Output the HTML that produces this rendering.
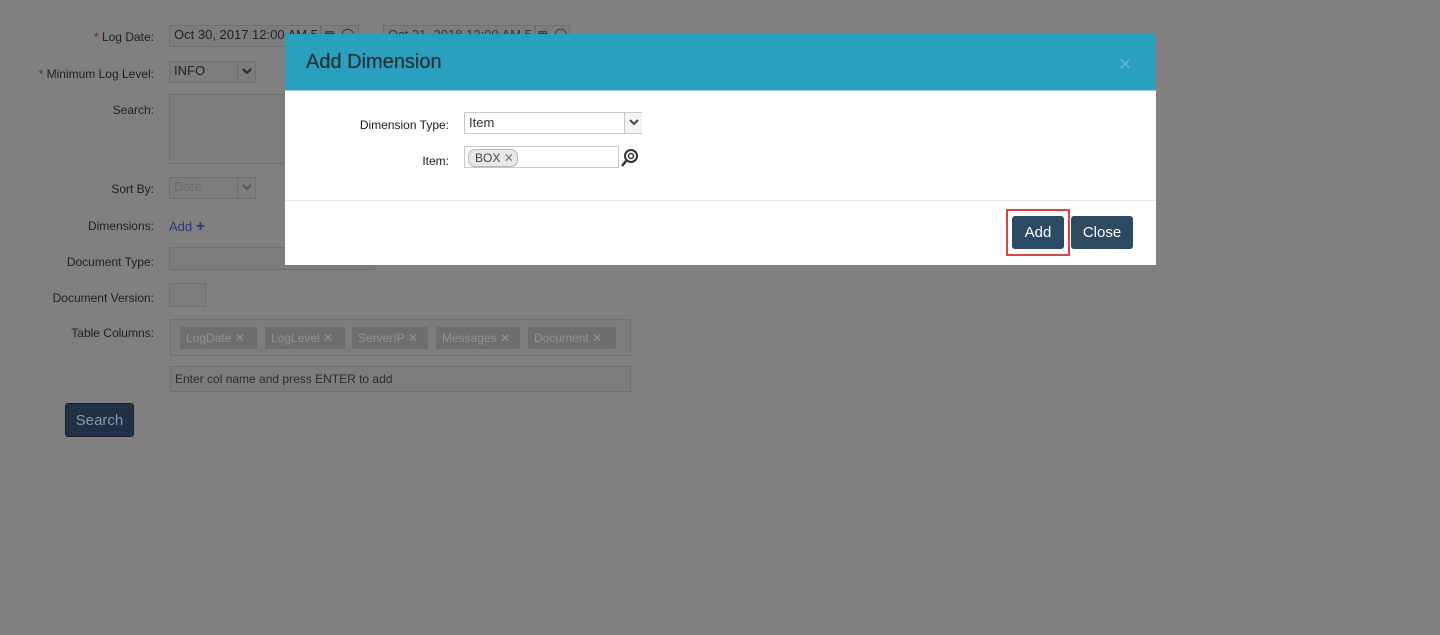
<!DOCTYPE html>
<html><head><meta charset="utf-8"><style>
*{box-sizing:border-box}
body{margin:0;width:1440px;height:635px;background:#808080;font-family:"Liberation Sans",sans-serif;font-size:12px;color:#1a1a1a;position:relative;overflow:hidden}
.a{position:absolute}
.lbl{position:absolute;text-align:right;width:154px;left:0;font-size:12px;color:#1e1e1e}
.req{color:#7a1f1f}
.box{position:absolute;border:1px solid #6f6f6f;background:#7d7d7d}
.txt{color:#222;font-size:13px;padding-left:4px;line-height:18px;overflow:hidden;white-space:nowrap}
.tag{position:absolute;top:327px;height:22px;background:#6e6e6e;border-radius:2px;color:#939393;font-size:12px;line-height:22px;padding-left:6px}
.btn{position:absolute;background:#2c4a61;color:#fff;border-radius:3px;font-size:15px;text-align:center}
.chev{position:absolute;border-left:1px solid #6f6f6f;width:18px;top:0;height:20px}
.chev svg{position:absolute;left:4px;top:6px}
.ico{position:absolute;font-size:12px;color:#2a2a2a}
</style></head><body>
<div class="lbl" style="top:30px"><span class="req">*</span> Log Date:</div>
<div class="box txt" style="left:169px;top:25px;width:152px;height:22px">Oct 30, 2017 12:00 AM 5</div>
<div class="box" style="left:321px;top:25px;width:38px;height:22px"></div>
<div class="ico" style="left:324px;top:28px">&#9638;</div><div class="ico" style="left:341px;top:27px">&#9711;</div>
<div class="box txt" style="left:383px;top:25px;width:152px;height:22px;color:#333">Oct 31, 2018 12:00 AM 5</div>
<div class="box" style="left:535px;top:25px;width:35px;height:22px"></div>
<div class="ico" style="left:537px;top:28px">&#9638;</div><div class="ico" style="left:554px;top:27px">&#9711;</div>
<div class="lbl" style="top:67px"><span class="req">*</span> Minimum Log Level:</div>
<div class="box txt" style="left:169px;top:61px;width:87px;height:22px">INFO<div class="chev" style="left:67px"><svg width="10" height="7"><path d="M1 1L5 5L9 1" fill="none" stroke="#2a2a2a" stroke-width="2"/></svg></div></div>
<div class="lbl" style="top:103px">Search:</div>
<div class="box" style="left:169px;top:94px;width:130px;height:70px"></div>
<div class="lbl" style="top:182px">Sort By:</div>
<div class="box txt" style="left:169px;top:177px;width:87px;height:22px;color:#6a6a6a">Date<div class="chev" style="left:67px"><svg width="10" height="7"><path d="M1 1L5 5L9 1" fill="none" stroke="#555" stroke-width="2"/></svg></div></div>
<div class="lbl" style="top:219px">Dimensions:</div>
<div class="a" style="left:169px;top:218px;font-size:13px;color:#263a7a">Add <b style="font-size:16px">+</b></div>
<div class="lbl" style="top:255px">Document Type:</div>
<div class="box" style="left:169px;top:247px;width:206px;height:23px"></div>
<div class="lbl" style="top:291px">Document Version:</div>
<div class="box" style="left:169px;top:283px;width:37px;height:24px"></div>
<div class="lbl" style="top:326px">Table Columns:</div>
<div class="box" style="left:170px;top:319px;width:461px;height:37px"></div>
<div class="tag" style="left:180px;width:77px">LogDate ✕</div>
<div class="tag" style="left:265px;width:80px">LogLevel ✕</div>
<div class="tag" style="left:352px;width:76px">ServerIP ✕</div>
<div class="tag" style="left:436px;width:84px">Messages ✕</div>
<div class="tag" style="left:528px;width:88px">Document ✕</div>
<div class="box" style="left:170px;top:366px;width:461px;height:26px;font-size:12px;color:#2a2a2a;line-height:24px;padding-left:4px">Enter col name and press ENTER to add</div>
<div class="btn" style="left:65px;top:403px;width:69px;height:34px;line-height:34px;background:#1f3142;color:#8a9aa8;border:1px solid #15222e">Search</div>

<div class="a" style="left:285px;top:34px;width:871px;height:231px;background:#fff">
 <div class="a" style="left:0;top:0;width:871px;height:57px;background:#2aa0bf;border-bottom:1px solid #9fd0df"></div>
 <div class="a" style="left:21px;top:17px;font-size:20px;color:#2c3338;-webkit-text-stroke:0.3px #2c3338">Add Dimension</div>
 <div class="a" style="left:833px;top:21px;font-size:17px;color:#5fb6cd">✕</div>
 <div class="a" style="left:0;width:164px;text-align:right;top:84px;font-size:12px">Dimension Type:</div>
 <div class="a" style="left:179px;top:78px;width:178px;height:22px;border:1px solid #c8c8c8;font-size:13px;line-height:20px;padding-left:4px;color:#333">Item<div class="chev" style="left:159px;border-color:#c8c8c8;background:#f3f3f3"><svg width="10" height="7"><path d="M1 1L5 5L9 1" fill="none" stroke="#444" stroke-width="2"/></svg></div></div>
 <div class="a" style="left:0;width:164px;text-align:right;top:120px;font-size:12px">Item:</div>
 <div class="a" style="left:179px;top:112px;width:155px;height:22px;border:1px solid #c8c8c8"></div>
 <div class="a" style="left:183px;top:115px;width:50px;height:18px;border:1px solid #b5b5b5;border-radius:7px;background:#e8e8e8;font-size:12px;line-height:16px;padding-left:6px;color:#444">BOX <span style="color:#6a7a8a">✕</span></div>
 <svg class="a" style="left:336px;top:113px" width="18" height="20" viewBox="0 0 18 20"><circle cx="10" cy="9" r="6" fill="none" stroke="#333" stroke-width="2"/><circle cx="10" cy="9" r="2.5" fill="none" stroke="#333" stroke-width="1.5"/><line x1="5" y1="14" x2="1" y2="19" stroke="#333" stroke-width="2.5"/></svg>
 <div class="a" style="left:0;top:166px;width:871px;height:1px;background:#e5e5e5"></div>
 <div class="a" style="left:721px;top:175px;width:64px;height:47px;border:2px solid #d9463f"></div>
 <div class="btn" style="left:727px;top:182px;width:52px;height:33px;line-height:33px">Add</div>
 <div class="btn" style="left:786px;top:182px;width:62px;height:33px;line-height:33px">Close</div>
</div>
</body></html>
